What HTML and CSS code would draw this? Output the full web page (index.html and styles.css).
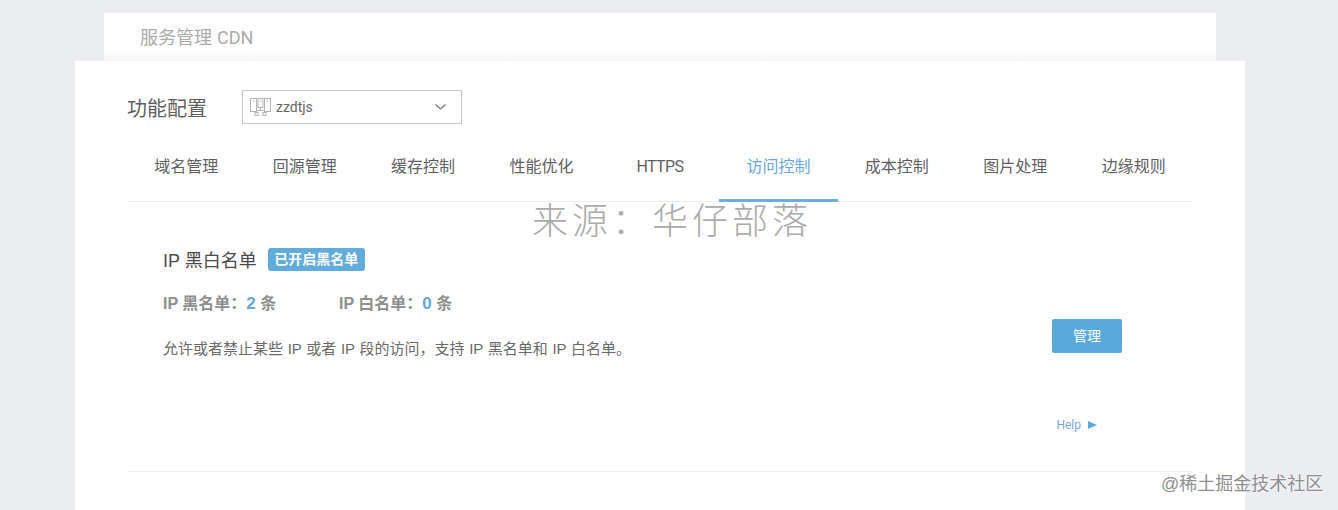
FILE: index.html
```html
<!DOCTYPE html>
<html lang="zh-CN">
<head>
    <meta charset="UTF-8">
    <title>服务管理 CDN</title>
    <link rel="stylesheet" href="styles.css">
</head>
<body>
    <div class="top-bar">服务管理 <span class="latin">CDN</span></div>

    <div class="main">
        <div class="config-row">
            <h2>功能配置</h2>
            <div class="select">
                <svg class="select-icon" width="21" height="18" viewBox="0 0 21 18" fill="none" stroke="#b4b4b4" stroke-width="1">
                    <rect x="0.5" y="0.5" width="6" height="13"/>
                    <rect x="8" y="0.5" width="5" height="9"/>
                    <rect x="14.5" y="0.5" width="6" height="13"/>
                    <path d="M2.5 3h2M9.5 3h2M16.5 3h2M10.5 9.5v3M6.5 14.5v-2h8v2"/>
                    <rect x="5" y="14.5" width="3" height="3"/>
                    <rect x="13" y="14.5" width="3" height="3"/>
                </svg>
                <span class="select-text">zzdtjs</span>
                <svg class="select-arrow" width="11" height="6" viewBox="0 0 11 6" fill="none" stroke="#777" stroke-width="1.3">
                    <path d="M0.5 0.5L5.5 5L10.5 0.5"/>
                </svg>
            </div>
        </div>

        <div class="tabs">
            <a class="tab">域名管理</a>
            <a class="tab">回源管理</a>
            <a class="tab">缓存控制</a>
            <a class="tab">性能优化</a>
            <a class="tab tab-latin">HTTPS</a>
            <a class="tab active">访问控制</a>
            <a class="tab">成本控制</a>
            <a class="tab">图片处理</a>
            <a class="tab">边缘规则</a>
        </div>

        <div class="section">
            <div class="section-body">
                <div class="section-title">
                    <h3>IP 黑白名单</h3>
                    <span class="badge">已开启黑名单</span>
                </div>
                <div class="counts">
                    <span class="count">IP 黑名单：<b>2</b> 条</span>
                    <span class="count">IP 白名单：<b>0</b> 条</span>
                </div>
                <p class="desc">允许或者禁止某些 IP 或者 IP 段的访问，支持 IP 黑名单和 IP 白名单。</p>
            </div>
            <div class="section-side">
                <button class="btn">管理</button>
                <a class="help">Help<span class="help-arrow"></span></a>
            </div>
        </div>
    </div>

    <div class="watermark">来源：华仔部落</div>
    <div class="juejin">@稀土掘金技术社区</div>
</body>
</html>
```

FILE: styles.css
```css
* {
    box-sizing: border-box;
}
html, body {
    height: 510px;
    overflow: hidden;
}
body {
    margin: 0;
    padding-top: 13px;
    background-color: #ebedf1;
    font-family: "Liberation Sans", "Noto Sans CJK SC", sans-serif;
    color: #555;
    position: relative;
}
h2, h3, p {
    margin: 0;
    font-weight: normal;
}
.top-bar {
    width: 1112px;
    height: 48px;
    margin-left: 104px;
    padding: 13px 0 0 36px;
    background: linear-gradient(#fff 78%, #f6f6f8);
    font-size: 18px;
    line-height: 24px;
    color: #aaa;
}
.latin {
    font-family: Roboto, sans-serif;
}
.main {
    width: 1170px;
    height: 449px;
    margin-left: 75px;
    padding: 29px 52px 0;
    background-color: #fff;
}
.config-row {
    display: flex;
    align-items: center;
    height: 34px;
}
.config-row h2 {
    width: 115px;
    font-size: 20px;
    color: #5f5f5f;
}
.select {
    width: 220px;
    height: 34px;
    display: flex;
    align-items: center;
    padding: 0 15px 0 7px;
    border: 1px solid #c8c8c8;
}
.select-icon {
    flex: none;
}
.select-text {
    flex: 1;
    margin-left: 5px;
    font-family: Roboto, sans-serif;
    font-size: 14px;
    color: #666;
}
.tabs {
    display: flex;
    width: 1066px;
    height: 78px;
    border-bottom: 1px solid #eee;
}
.tab {
    flex: 1;
    height: 78px;
    padding-top: 32px;
    text-align: center;
    font-size: 16px;
    line-height: 22px;
    color: #5f5f5f;
}
.tab-latin {
    font-family: Roboto, sans-serif;
    letter-spacing: -0.6px;
}
.tab.active {
    color: #6aa6dc;
    border-bottom: 3px solid #6aaee0;
}
.section {
    display: flex;
    justify-content: space-between;
    width: 1066px;
    height: 270px;
    padding: 0 36px;
    border-bottom: 1px solid #eee;
}
.section-title {
    display: flex;
    align-items: center;
    margin-top: 45px;
    height: 24px;
}
.section-title h3 {
    font-size: 18px;
    color: #4a4a4a;
}
.badge {
    width: 97px;
    height: 23px;
    margin-left: 11px;
    background-color: #62acdc;
    border-radius: 3px;
    text-align: center;
    font-size: 14px;
    font-weight: bold;
    line-height: 23px;
    color: #fff;
}
.counts {
    display: flex;
    margin-top: 20px;
    height: 22px;
    align-items: center;
}
.count {
    width: 176px;
    font-size: 16px;
    font-weight: bold;
    color: #8e8e8e;
}
.count b {
    font-size: 17px;
    color: #64a8d8;
}
.desc {
    margin-top: 26px;
    font-size: 15px;
    line-height: 20px;
    word-spacing: 0.5px;
    color: #6a6a6a;
}
.section-side {
    display: flex;
    flex-direction: column;
    align-items: flex-end;
    margin-right: 35px;
}
.btn {
    width: 70px;
    height: 34px;
    margin-top: 117px;
    padding: 0 0 2px;
    border: none;
    border-radius: 2px;
    background-color: #5aa9dc;
    font-family: inherit;
    font-size: 14px;
    color: #fff;
}
.help {
    display: flex;
    align-items: center;
    margin: 63px 25px 0 0;
    font-family: Roboto, sans-serif;
    font-size: 12px;
    line-height: 18px;
    color: #79a9d8;
}
.help-arrow {
    width: 0;
    height: 0;
    margin-left: 7px;
    border-left: 9px solid #5aa9dc;
    border-top: 4px solid transparent;
    border-bottom: 4px solid transparent;
}
.watermark {
    position: absolute;
    left: 532px;
    top: 195px;
    font-size: 36px;
    line-height: 46px;
    letter-spacing: 4px;
    font-family: "Noto Sans CJK SC", sans-serif;
    font-weight: 300;
    color: #ababab;
}
.juejin {
    position: absolute;
    left: 1161px;
    top: 472px;
    font-size: 18px;
    line-height: 24px;
    color: #8f8f8f;
    white-space: nowrap;
    text-shadow: 0 0 3px #fff;
}
```
